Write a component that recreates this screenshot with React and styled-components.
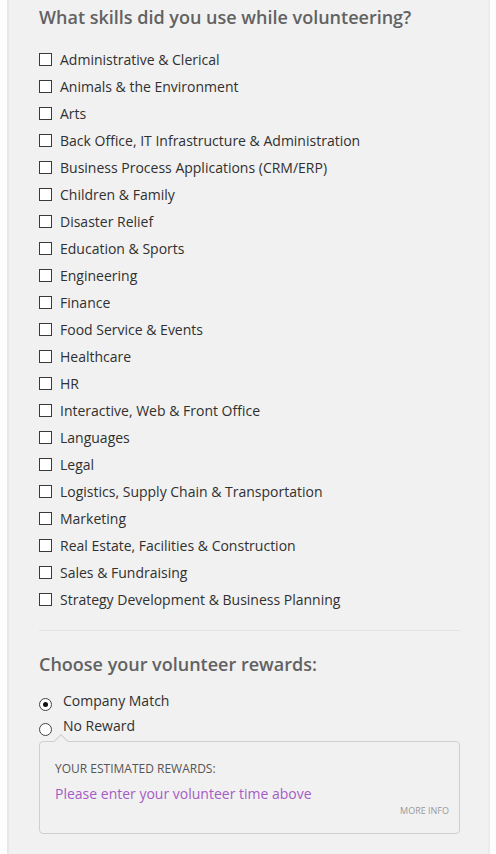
import styled, { createGlobalStyle } from "styled-components";

const GlobalStyle = createGlobalStyle`
    html, body {
        margin: 0;
        padding: 0;
        background: #fdfdfd;
    }
    body {
        font-family: "Open Sans", "Liberation Sans", sans-serif;
    }
`;

const skills = [
    "Administrative & Clerical",
    "Animals & the Environment",
    "Arts",
    "Back Office, IT Infrastructure & Administration",
    "Business Process Applications (CRM/ERP)",
    "Children & Family",
    "Disaster Relief",
    "Education & Sports",
    "Engineering",
    "Finance",
    "Food Service & Events",
    "Healthcare",
    "HR",
    "Interactive, Web & Front Office",
    "Languages",
    "Legal",
    "Logistics, Supply Chain & Transportation",
    "Marketing",
    "Real Estate, Facilities & Construction",
    "Sales & Fundraising",
    "Strategy Development & Business Planning",
];

const Panel = styled.div`
    margin: 0 6px 0 7px;
    min-height: 854px;
    box-sizing: border-box;
    background-color: #f1f1f1;
    border-left: 2px solid #e7e7e7;
    border-right: 2px solid #ececec;
    padding: 4px 28px 20px 30px;
`;

const Heading = styled.h2`
    margin: 0;
    font-size: 18px;
    font-weight: 600;
    color: #626262;
    line-height: 26px;
`;

const SkillList = styled.ul`
    list-style: none;
    margin: 16px 0 0;
    padding: 0;
`;

const SkillRow = styled.li`
    display: flex;
    align-items: center;
    height: 27px;
`;

const Box = styled.span`
    width: 11px;
    height: 11px;
    border: 1px solid #3a3a3a;
    background: #fff;
    margin-right: 8px;
    flex-shrink: 0;
`;

const Label = styled.span`
    font-size: 14px;
    color: #303030;
`;

const Divider = styled.hr`
    border: 0;
    border-top: 1px solid #e4e4e4;
    margin: 17px 0 0;
`;

const SubHeading = styled(Heading)`
    margin-top: 20px;
`;

const RadioGroup = styled.div`
    margin-top: 11px;
`;

const RadioRow = styled.div`
    display: flex;
    align-items: center;
    height: 25px;
`;

const Radio = styled.span`
    position: relative;
    width: 11px;
    height: 11px;
    border-radius: 50%;
    border: 1px solid #444;
    background: #fff;
    margin: 8px 11px 0 0;
    flex-shrink: 0;
    &::after {
        content: "";
        display: ${({ $checked }) => ($checked ? "block" : "none")};
        position: absolute;
        left: 3px;
        top: 3px;
        width: 5px;
        height: 5px;
        border-radius: 50%;
        background: #111;
    }
`;

const RewardsBox = styled.div`
    position: relative;
    margin-top: 3px;
    border: 1px solid #cfcfcf;
    border-radius: 4px;
    padding: 18px 10px 16px 15px;
    &::before {
        content: "";
        position: absolute;
        top: -6px;
        left: 16px;
        width: 9px;
        height: 9px;
        background: #f1f1f1;
        border-left: 1px solid #cfcfcf;
        border-top: 1px solid #cfcfcf;
        transform: rotate(45deg);
    }
`;

const RewardsTitle = styled.div`
    font-size: 12px;
    color: #555;
    text-transform: uppercase;
    line-height: 17px;
`;

const RewardsValue = styled.div`
    margin-top: 7px;
    font-size: 14px;
    color: #a55cc6;
    line-height: 20px;
`;

const MoreInfo = styled.div`
    text-align: right;
    font-size: 9px;
    color: #9a9a9a;
    line-height: 12px;
    margin-top: 1px;
`;

const App = () => {
    return (
        <>
            <GlobalStyle />
            <Panel>
                <Heading>What skills did you use while volunteering?</Heading>
                <SkillList>
                    {skills.map((skill) => (
                        <SkillRow key={skill}>
                            <Box />
                            <Label>{skill}</Label>
                        </SkillRow>
                    ))}
                </SkillList>
                <Divider />
                <SubHeading>Choose your volunteer rewards:</SubHeading>
                <RadioGroup>
                    <RadioRow>
                        <Radio $checked />
                        <Label>Company Match</Label>
                    </RadioRow>
                    <RadioRow>
                        <Radio />
                        <Label>No Reward</Label>
                    </RadioRow>
                </RadioGroup>
                <RewardsBox>
                    <RewardsTitle>Your estimated rewards:</RewardsTitle>
                    <RewardsValue>Please enter your volunteer time above</RewardsValue>
                    <MoreInfo>MORE INFO</MoreInfo>
                </RewardsBox>
            </Panel>
        </>
    );
};

export default App;
